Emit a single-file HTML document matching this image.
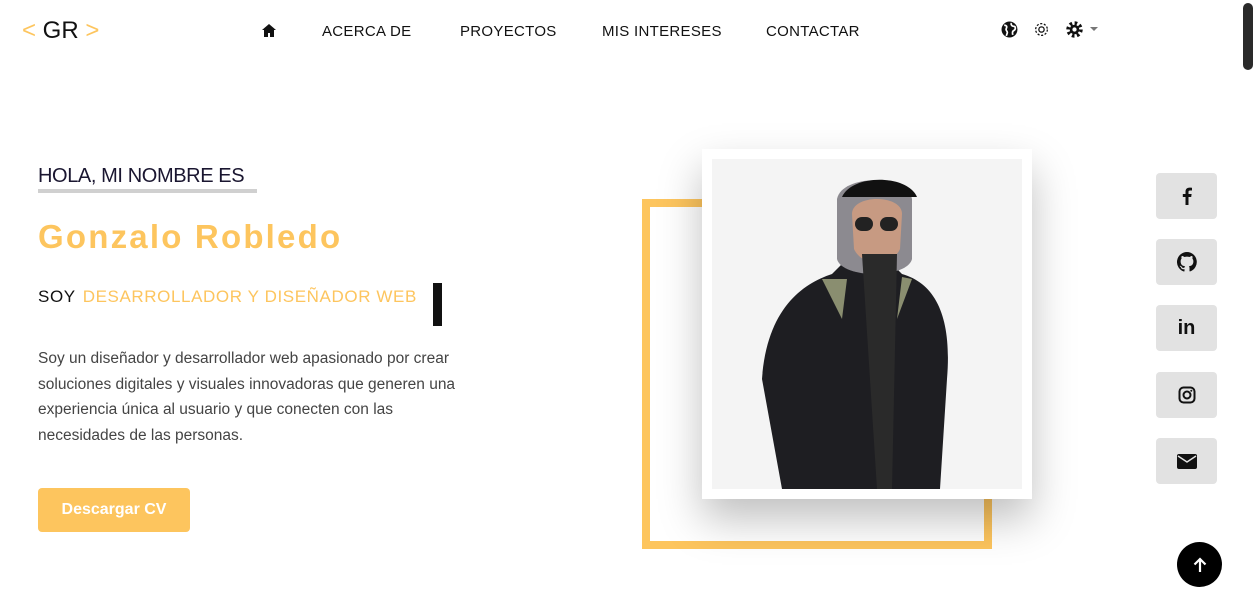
<!DOCTYPE html>
<html><head><meta charset="utf-8"><style>
*{margin:0;padding:0;box-sizing:border-box}
body{width:1260px;height:608px;overflow:hidden;background:#fff;font-family:"Liberation Sans",sans-serif;position:relative;color:#111}
.abs{position:absolute}
.nav a{position:absolute;top:23px;font-size:15px;letter-spacing:.3px;color:#111;text-decoration:none;font-weight:500}
.soc{position:absolute;left:1156px;width:61px;height:46px;background:#e2e2e2;border-radius:4px;display:flex;align-items:center;justify-content:center}
</style></head><body>
<div class="abs" style="left:22px;top:17px;font-size:24px;"><span style="color:#fdc55e">&lt;</span> GR <span style="color:#fdc55e">&gt;</span></div>
<svg class="abs" style="left:262px;top:24px" width="14" height="13" viewBox="0 0 14 13"><path d="M7 0L0 6h2v7h4V9h2v4h4V6h2z" fill="#111"/></svg>
<div class="nav"><a style="left:322px">ACERCA DE</a><a style="left:460px">PROYECTOS</a><a style="left:602px">MIS INTERESES</a><a style="left:766px">CONTACTAR</a></div>
<svg class="abs" style="left:1001px;top:21px" width="17" height="17" viewBox="0 0 16 16"><circle cx="8" cy="8" r="7.5" fill="#111"/><path d="M3 4c2 0 3 1 2 3s1 2 1 4l-1 3M10 2c-1 1 0 3 2 3s2 3 0 4-1 3-1 4" stroke="#fff" stroke-width="1.6" fill="none"/></svg>
<svg class="abs" style="left:1033px;top:21px" width="17" height="17" viewBox="0 0 16 16"><circle cx="8" cy="8" r="5.5" fill="none" stroke="#111" stroke-width="1.2" stroke-dasharray="2 1.5"/><circle cx="8" cy="8" r="2.5" fill="none" stroke="#111" stroke-width="1.2"/></svg>
<svg class="abs" style="left:1066px;top:21px" width="17" height="17" viewBox="0 0 16 16"><circle cx="8" cy="8" r="6" fill="none" stroke="#111" stroke-width="3.5" stroke-dasharray="2.4 2.3"/><circle cx="8" cy="8" r="4.5" fill="#111"/><circle cx="8" cy="8" r="2" fill="#fff"/></svg>
<div class="abs" style="left:1090px;top:27px;border:4px solid transparent;border-top:4px solid #777;width:0;height:0"></div>
<div class="abs" style="left:1243px;top:3px;width:10px;height:67px;background:#2a2a2a;border-radius:5px"></div>

<div class="abs" style="left:38px;top:163px;font-size:20px;color:#1a1630;line-height:27px;border-bottom:4px solid #d0d0d0;width:219px;height:30px;white-space:nowrap;letter-spacing:-.4px">HOLA, MI NOMBRE ES</div>
<div class="abs" style="left:38px;top:218px;font-size:33px;font-weight:bold;color:#fdc55e;letter-spacing:2.2px;white-space:nowrap">Gonzalo Robledo</div>
<div class="abs" style="left:38px;top:287px;font-size:17px;letter-spacing:.6px;white-space:nowrap"><span>SOY</span> <span style="color:#fdc55e;margin-left:2px">DESARROLLADOR Y DISEÑADOR WEB</span></div>
<div class="abs" style="left:433px;top:283px;width:9px;height:43px;background:#111"></div>
<div class="abs" style="left:38px;top:346px;font-size:15.5px;line-height:25.5px;color:#444;width:442px">Soy un diseñador y desarrollador web apasionado por crear soluciones digitales y visuales innovadoras que generen una experiencia única al usuario y que conecten con las necesidades de las personas.</div>
<div class="abs" style="left:38px;top:488px;width:152px;height:44px;background:#fdc55e;border-radius:4px;color:#fff;font-weight:bold;font-size:16px;text-align:center;line-height:44px">Descargar CV</div>

<div class="abs" style="left:642px;top:199px;width:350px;height:350px;border:8px solid #fdc55e"></div>
<div class="abs" style="left:702px;top:149px;width:330px;height:350px;background:#fff;box-shadow:0 20px 40px rgba(0,0,0,.25)"></div>
<div class="abs" style="left:712px;top:159px;width:310px;height:330px;background:#f4f4f4;overflow:hidden">
<svg width="310" height="330" viewBox="0 0 310 330">
<path d="M70 330 L50 220 C55 150 90 125 120 115 L135 100 L175 100 L190 115 C225 125 240 160 235 220 L228 330Z" fill="#1e1e22"/>
<path d="M125 40 C130 15 195 15 200 40 L200 100 C195 120 130 120 125 100Z" fill="#8c8a90"/>
<path d="M140 55 C140 35 190 35 190 55 L188 90 C180 108 150 108 142 90Z" fill="#c79a82"/>
<path d="M130 38 C140 15 195 15 205 38 Z" fill="#111"/>
<rect x="143" y="58" width="18" height="14" rx="7" fill="#222"/><rect x="168" y="58" width="18" height="14" rx="7" fill="#222"/>
<path d="M150 95 L165 330 L180 330 L185 95Z" fill="#2a2a2a"/>
<path d="M110 120 L130 160 L135 120Z M200 120 L185 160 L190 118Z" fill="#8a8e70"/>
</svg></div>

<div class="soc" style="top:173px"><svg width="12" height="18" viewBox="0 0 10 18"><path d="M6.5 18V10h2.7l.4-3H6.5V5c0-.9.3-1.5 1.6-1.5H10V.8C9.6.7 8.6.6 7.5.6 5.1.6 3.5 2 3.5 4.7V7H.8v3h2.7v8z" fill="#111"/></svg></div>
<div class="soc" style="top:239px"><svg width="20" height="20" viewBox="0 0 16 16"><path fill="#111" d="M8 0a8 8 0 00-2.5 15.6c.4 0 .5-.2.5-.4v-1.5c-2.2.5-2.7-1-2.7-1-.4-.9-.9-1.2-.9-1.2-.7-.5.1-.5.1-.5.8.1 1.2.8 1.2.8.7 1.3 1.9.9 2.300.7.1-.5.3-.9.5-1.1-1.8-.2-3.6-.9-3.6-4 0-.9.3-1.6.8-2.1-.1-.2-.4-1 .1-2.1 0 0 .7-.2 2.2.8a7.5 7.5 0 014 0c1.5-1 2.2-.8 2.2-.8.4 1.1.2 1.9.1 2.1.5.6.8 1.3.8 2.1 0 3.1-1.9 3.8-3.6 4 .3.3.5.8.5 1.5v2.2c0 .2.1.5.6.4A8 8 0 008 0z"/></svg></div>
<div class="soc" style="top:305px;font-weight:bold;font-size:20px">in</div>
<div class="soc" style="top:372px"><svg width="18" height="18" viewBox="0 0 18 18"><rect x="1.5" y="1.5" width="15" height="15" rx="4" fill="none" stroke="#111" stroke-width="2"/><circle cx="9" cy="9" r="3.5" fill="none" stroke="#111" stroke-width="2"/><circle cx="13.3" cy="4.7" r="1" fill="#111"/></svg></div>
<div class="soc" style="top:438px"><svg width="20" height="15" viewBox="0 0 20 15"><rect width="20" height="15" rx="2" fill="#111"/><path d="M1 2l9 6 9-6" stroke="#e2e2e2" stroke-width="1.5" fill="none"/></svg></div>
<div class="abs" style="left:1177px;top:542px;width:45px;height:45px;border-radius:50%;background:#000;display:flex;align-items:center;justify-content:center"><svg width="14" height="16" viewBox="0 0 14 16"><path d="M7 15V2M1.5 7.5L7 2l5.5 5.5" stroke="#fff" stroke-width="2.2" fill="none"/></svg></div>
</body></html>
